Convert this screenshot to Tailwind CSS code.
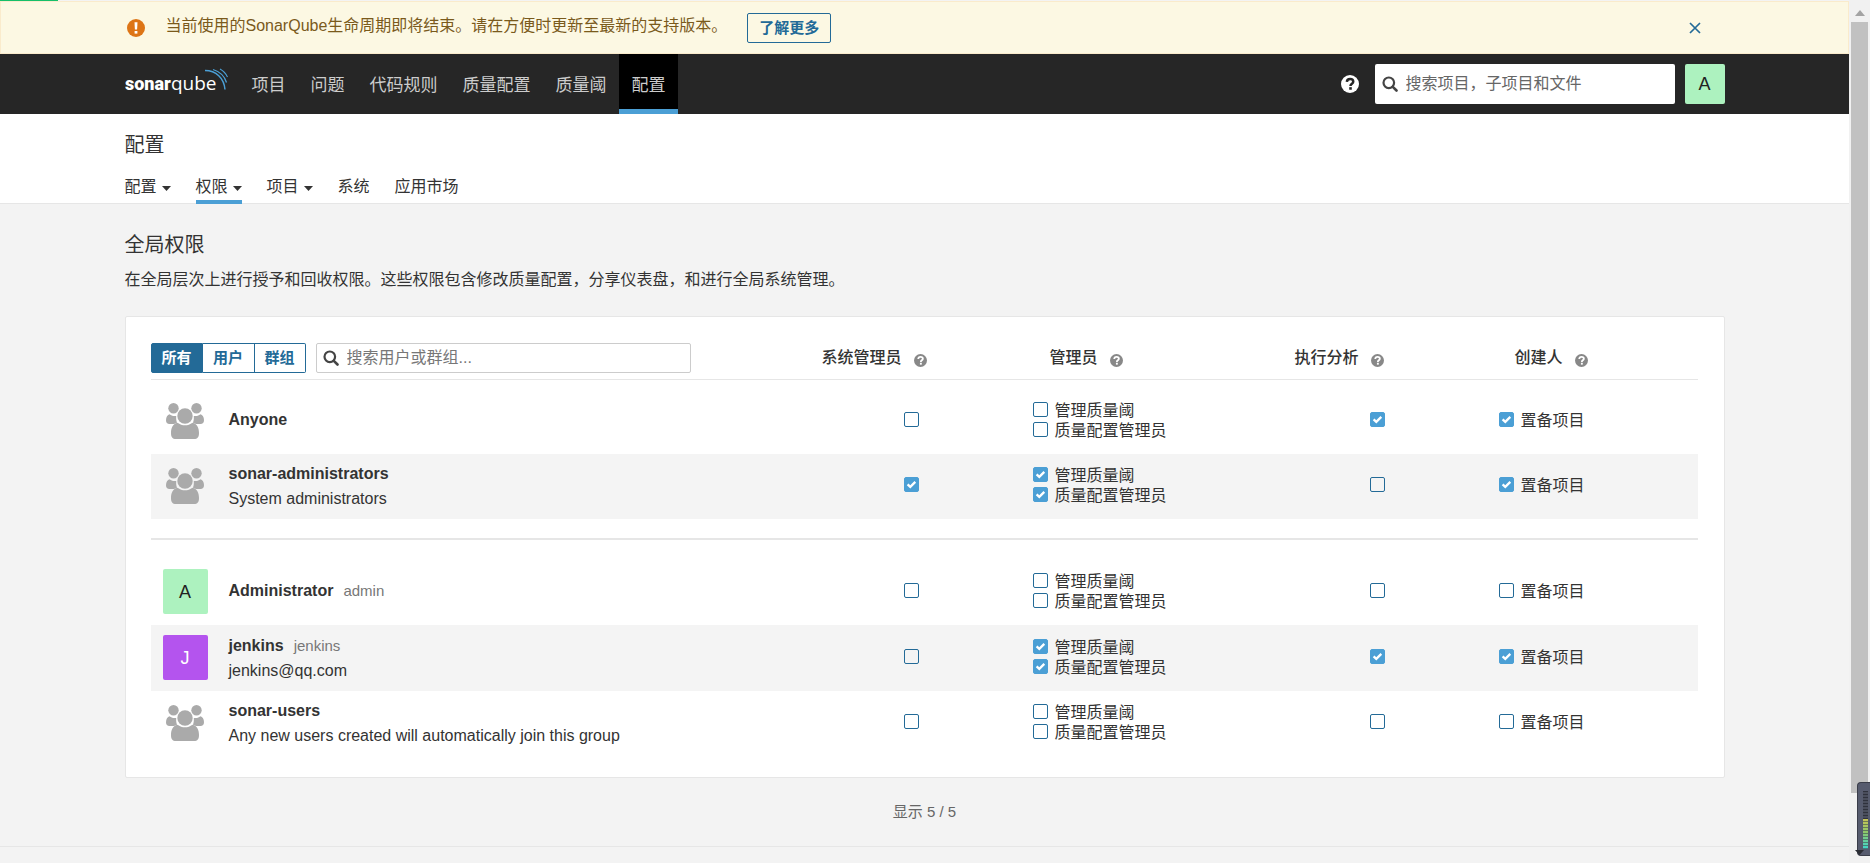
<!DOCTYPE html>
<html lang="zh-CN">
<head>
<meta charset="utf-8">
<title>全局权限</title>
<script src="https://cdn.jsdelivr.net/npm/@tailwindcss/browser@4"></script>
</head>
<body class="bg-[#f3f3f3] font-['Liberation_Sans','Noto_Sans_CJK_SC',sans-serif] text-base leading-5 text-[#333]">
<svg class="hidden" aria-hidden="true">
  <symbol id="help" viewBox="0 0 16 16"><circle cx="8" cy="8" r="8" fill="currentColor"/><path d="M5.200 6.100C5.300 4.400 6.400 3.500 8.100 3.500c1.600 0 2.800.9 2.800 2.400 0 1.800-2.500 1.900-2.500 3.800" fill="none" stroke="var(--mark)" stroke-width="2.200"/><rect x="7.300" y="10.800" width="2.300" height="2.300" fill="var(--mark)"/></symbol>
  <symbol id="search" viewBox="0 0 16 16"><circle cx="6.800" cy="6.800" r="5.300" fill="none" stroke="currentColor" stroke-width="2.200"/><path d="M10.800 10.800l3.700 3.700" stroke="currentColor" stroke-width="2.600" stroke-linecap="round"/></symbol>
  <symbol id="caret" viewBox="0 0 9 5"><path d="M0 0h9L4.500 5z" fill="currentColor"/></symbol>
  <symbol id="group" viewBox="0 0 38 36">
    <g fill="currentColor"><circle cx="7.500" cy="5.200" r="5.200"/><circle cx="30.500" cy="5.200" r="5.200"/>
    <path d="M3.500 11.200c-2 .6-3.500 2.600-3.500 6.100 0 2.500 1.400 3.700 3.400 3.700h4.400c1.300 0 2.200-.9 3.300-1.400-.7-1.700-1.100-3.500-.9-6.700-1.900.3-4.600 0-6.700-1.700zM34.500 11.200c2 .6 3.500 2.600 3.500 6.100 0 2.500-1.400 3.700-3.400 3.700h-4.400c-1.300 0-2.200-.9-3.300-1.400.7-1.700 1.100-3.500.9-6.700 1.900.3 4.600 0 6.700-1.700z"/>
    <circle cx="19" cy="13" r="7.700"/>
    <path d="M11.500 19.800c-4.500.8-6.500 5.200-6.500 10.200 0 4 1.500 6 5 6h18c3.500 0 5-2 5-6 0-5-2-9.400-6.500-10.200-4.500 3.400-10.500 3.400-15 0z"/></g>
  </symbol>
</svg>

<div class="flex min-h-screen">
<div class="flex min-w-0 flex-1 flex-col">
  <div class="h-px bg-[#f3f3f3]"><div class="h-px w-[58px] bg-[#15bf6a]"></div></div>

  <div role="alert" class="h-[53px] border border-[#faebcc] bg-[#fcf8e3]">
    <div class="mx-auto flex h-full max-w-[1600px] items-center text-[#7a5a1c]">
      <svg class="ml-[2px] size-[18px]" viewBox="0 0 18 18"><circle cx="9" cy="9" r="9" fill="#dd7516"/><path d="M7.500 3.200h3l-.4 7.300H7.900z" fill="#fff"/><rect x="7.600" y="12" width="2.800" height="2.600" fill="#fff"/></svg>
      <span class="ml-[21px] pb-1">当前使用的SonarQube生命周期即将结束。请在方便时更新至最新的支持版本。</span>
      <button class="ml-5 h-[30px] rounded-[2px] border border-[#236a97] px-[11px] text-[15px] font-bold text-[#236a97]">了解更多</button>
      <button aria-label="关闭" class="mr-6 ml-auto text-[#236a97]"><svg class="size-3" viewBox="0 0 12 12"><path d="M1 1l10 10M11 1L1 11" stroke="currentColor" stroke-width="1.700"/></svg></button>
    </div>
  </div>

  <header class="h-[60px] bg-[#262626]">
    <div class="mx-auto flex h-full max-w-[1600px] items-center">
      <a href="#" aria-label="SonarQube" class="w-[104px]"><svg class="h-8 w-[104px]" viewBox="0 0 104 32">
        <text y="22" fill="#fff" font-size="18" class="font-['Roboto']"><tspan font-weight="900">sonar</tspan><tspan font-family="Open Sans" font-size="19" font-weight="400">qube</tspan></text>
        <g fill="none" stroke="#4b9fd5"><path d="M80 2.500c11 0 19 7.500 20 19" stroke-width="1.500"/><path d="M88 1.500c6.500 2 11.500 6.500 13.500 13" stroke-width="1.300"/><path d="M95 1c3.500 2 6 4.700 7.500 8" stroke-width="1.100"/></g>
      </svg></a>
      <nav class="ml-[10px] flex h-full text-[17px] text-[#ccc]">
        <a href="#" class="flex items-center pt-[3px] pr-3 pl-[13px]">项目</a>
        <a href="#" class="flex items-center pt-[3px] pr-3 pl-[13px]">问题</a>
        <a href="#" class="flex items-center pt-[3px] pr-3 pl-[13px]">代码规则</a>
        <a href="#" class="flex items-center pt-[3px] pr-3 pl-[13px]">质量配置</a>
        <a href="#" class="flex items-center pt-[3px] pr-3 pl-[13px]">质量阈</a>
        <a href="#" aria-current="page" class="flex items-center border-b-5 border-[#4b9fd5] bg-black pt-2 pr-3 pl-[13px]">配置</a>
      </nav>
      <button aria-label="帮助" class="ml-auto text-white [--mark:#262626]"><svg class="size-[18px]"><use href="#help"/></svg></button>
      <label class="ml-4 flex h-10 w-[300px] items-center rounded-[2px] bg-white px-[7px]">
        <svg class="size-4 shrink-0 text-[#444]"><use href="#search"/></svg>
        <input type="search" aria-label="搜索" placeholder="搜索项目，子项目和文件" class="ml-2 w-full min-w-0 outline-none placeholder:text-[#666]">
      </label>
      <button class="ml-[10px] size-10 rounded-[2px] bg-[#adf2bf] text-lg text-[#222]">A</button>
    </div>
  </header>

  <div class="h-[90px] border-b border-[#e6e6e6] bg-white">
    <div class="mx-auto flex h-full max-w-[1600px] flex-col justify-between">
      <h1 class="pt-[21px] text-xl leading-5">配置</h1>
      <nav class="-mb-px flex gap-[25px]">
        <button class="flex items-center gap-[5px] border-b-4 border-transparent pb-[3px]">配置<svg class="mt-[2px] h-[5px] w-[9px]"><use href="#caret"/></svg></button>
        <button class="flex items-center gap-[5px] border-b-4 border-[#4b9fd5] pb-[3px]">权限<svg class="mt-[2px] h-[5px] w-[9px]"><use href="#caret"/></svg></button>
        <button class="flex items-center gap-[5px] border-b-4 border-transparent pb-[3px]">项目<svg class="mt-[2px] h-[5px] w-[9px]"><use href="#caret"/></svg></button>
        <a href="#" class="border-b-4 border-transparent pb-[3px]">系统</a>
        <a href="#" class="border-b-4 border-transparent pb-[3px]">应用市场</a>
      </nav>
    </div>
  </div>

  <main class="mx-auto w-full max-w-[1600px] flex-1">
    <h2 class="pt-[31px] text-xl leading-5">全局权限</h2>
    <p class="pt-[15px] pb-[26px]">在全局层次上进行授予和回收权限。这些权限包含修改质量配置，分享仪表盘，和进行全局系统管理。</p>
    <section class="rounded-[2px] border border-[#e6e6e6] bg-white pt-[26px] pr-[26px] pb-[21px] pl-[25px]">
      <table class="w-full table-fixed border-collapse text-left">
        <colgroup><col><col class="w-[211px]"><col class="w-[261px]"><col class="w-[205px]"><col class="w-[199px]"></colgroup>
        <thead>
          <tr class="border-b border-[#e6e6e6]">
            <th class="p-0 pb-[6px] font-normal">
              <div class="flex">
                <div role="group" aria-label="筛选" class="flex h-[30px] text-[15px] font-bold text-[#236a97]">
                  <button aria-pressed="true" class="w-[52px] rounded-l-[2px] border border-[#236a97] bg-[#236a97] text-white">所有</button>
                  <button class="w-[52px] border border-l-0 border-[#236a97]">用户</button>
                  <button class="w-[51px] rounded-r-[2px] border border-l-0 border-[#236a97]">群组</button>
                </div>
                <label class="ml-[10px] flex h-[30px] w-[375px] items-center rounded-[2px] border border-[#ccc] px-[6px]">
                  <svg class="size-4 shrink-0 text-[#444]"><use href="#search"/></svg>
                  <input type="search" aria-label="搜索用户或群组" placeholder="搜索用户或群组..." class="ml-2 w-full min-w-0 outline-none placeholder:text-[#777]">
                </label>
              </div>
            </th>
            <th class="p-0 pb-[6px] font-medium"><span class="flex items-center gap-3">系统管理员<button aria-label="说明" class="pt-1 text-[#888] [--mark:#fff]"><svg class="block size-[13px]"><use href="#help"/></svg></button></span></th>
            <th class="p-0 pb-[6px] pl-[17px] font-medium"><span class="flex items-center gap-3">管理员<button aria-label="说明" class="pt-1 text-[#888] [--mark:#fff]"><svg class="block size-[13px]"><use href="#help"/></svg></button></span></th>
            <th class="p-0 pb-[6px] pl-px font-medium"><span class="flex items-center gap-3">执行分析<button aria-label="说明" class="pt-1 text-[#888] [--mark:#fff]"><svg class="block size-[13px]"><use href="#help"/></svg></button></span></th>
            <th class="p-0 pb-[6px] pl-4 font-medium"><span class="flex items-center gap-3">创建人<button aria-label="说明" class="pt-1 text-[#888] [--mark:#fff]"><svg class="block size-[13px]"><use href="#help"/></svg></button></span></th>
          </tr>
        </thead>
        <tbody id="granted"></tbody>
        <tbody id="others"></tbody>
      </table>
    </section>
    <footer class="pt-6 text-center text-[15px] text-[#666]">显示 5 / 5</footer>
  </main>
  <div class="h-[17px] border-t border-[#e6e6e6]"></div>
</div>

<div aria-hidden="true" class="relative w-[21px] bg-[#f1f1f1]">
  <svg class="absolute top-[10px] left-[6px] h-[6px] w-[10px] text-[#a3a3a3]" viewBox="0 0 10 6"><path d="M0 6l5-6 5 6z" fill="currentColor"/></svg>
  <div class="absolute top-[22px] bottom-[70px] left-[2px] w-[17px] bg-[#c1c1c1]"></div>
  <div class="absolute right-0 bottom-[7px] h-[74px] w-[13px] rounded-l-[4px] border border-r-0 border-[#3a3d49] bg-[#565b6e]">
    <div class="absolute top-2 right-[2px] h-7 w-[5px] bg-[repeating-linear-gradient(#2f323d_0_1px,#4a4e5c_1px_3px)]"></div>
    <div class="absolute top-9 right-[2px] h-[30px] w-[5px] bg-[linear-gradient(#c8c455,#8cc86c_45%,#3fd6cf)]"></div>
    <div class="absolute top-9 right-[2px] h-[30px] w-[5px] bg-[repeating-linear-gradient(transparent_0_2px,#3d4a4a99_2px_3px)]"></div>
  </div>
  <svg class="absolute bottom-2 left-[6px] h-[5px] w-[9px] text-[#2a2c33]"><use href="#caret"/></svg>
</div>
</div>

<script>
const box = (on, text, who, name) => `<label class="flex h-5 items-start gap-[7px] leading-5">
  <span class="mt-px grid size-[15px] shrink-0">
    <input type="checkbox" ${on ? 'checked' : ''} ${text ? '' : `aria-label="${who} ${name}"`} class="peer col-start-1 row-start-1 size-[15px] appearance-none rounded-[2px] border border-[#236a97] checked:border-[#4b9fd5] checked:bg-[#4b9fd5]">
    <svg class="pointer-events-none invisible col-start-1 row-start-1 size-[15px] peer-checked:visible" viewBox="0 0 15 15"><path d="M3.600 7.300l2.700 2.600 5-5" fill="none" stroke="#fff" stroke-width="2.300"/></svg>
  </span>${text ? `<span>${text}</span>` : ''}</label>`;
const icons = {
  group: '<svg class="h-9 w-[38px] text-[#aaa]"><use href="#group"/></svg>',
  A: '<span class="flex size-[45px] items-center justify-center rounded-[2px] bg-[#adf2bf] text-lg text-[#222]">A</span>',
  J: '<span class="flex size-[45px] items-center justify-center rounded-[2px] bg-[#b454ee] text-lg text-white">J</span>'
};
const row = r => `<tr class="${r.tall ? 'h-[66px]' : 'h-[65px]'} ${r.shade ? 'bg-[#f4f4f4]' : ''}">
  <td class="p-0 pl-3"><div class="flex items-center"><span class="flex w-[45px] shrink-0 justify-center">${icons[r.icon]}</span>
    <div class="ml-[21px] leading-[25px] ${r.note ? '' : 'pb-[3px]'}"><div><strong>${r.name}</strong>${r.login ? `<span class="ml-[10px] text-[15px] text-[#777]">${r.login}</span>` : ''}</div>${r.note ? `<div>${r.note}</div>` : ''}</div></div></td>
  <td class="p-0 pl-[82px]">${box(r.on[0], '', r.name, '系统管理员')}</td>
  <td class="p-0">${box(r.on[1], '管理质量阈')}${box(r.on[2], '质量配置管理员')}</td>
  <td class="p-0 pl-[76px]">${box(r.on[3], '', r.name, '执行分析')}</td>
  <td class="p-0">${box(r.on[4], '置备项目')}</td></tr>`;
document.getElementById('granted').innerHTML = '<tr class="h-[9px]"><td colspan="5" class="p-0"></td></tr>' + [
  { icon: 'group', name: 'Anyone', on: [0, 0, 0, 1, 1] },
  { icon: 'group', name: 'sonar-administrators', note: 'System administrators', shade: 1, on: [1, 1, 1, 0, 1] }
].map(row).join('');
document.getElementById('others').innerHTML = '<tr class="h-10"><td colspan="5" class="p-0"><hr class="border-t-2 border-[#e6e6e6]"></td></tr>' + [
  { icon: 'A', name: 'Administrator', login: 'admin', tall: 1, on: [0, 0, 0, 0, 0] },
  { icon: 'J', name: 'jenkins', login: 'jenkins', note: 'jenkins@qq.com', tall: 1, shade: 1, on: [0, 1, 1, 1, 1] },
  { icon: 'group', name: 'sonar-users', note: 'Any new users created will automatically join this group', on: [0, 0, 0, 0, 0] }
].map(row).join('');
</script>
</body>
</html>
